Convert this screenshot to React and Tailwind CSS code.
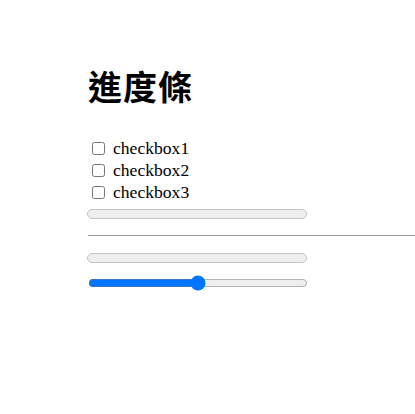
import React from "react";

function Bar({ className = "" }) {
  return (
    <div
      role="progressbar"
      aria-valuenow={0}
      className={`h-[10px] w-[220px] rounded-full border border-[#c4c4c4] bg-[#efefef] ${className}`}
    />
  );
}

function App() {
  const items = ["checkbox1", "checkbox2", "checkbox3"];
  return (
    <div className="min-h-[414px] w-full bg-white pl-[88px] pt-[66px] font-['Liberation_Serif',serif] text-black">
      <h1 className="text-[34px] leading-[40px] font-semibold font-['Noto_Sans_CJK_TC','Noto_Sans_CJK_SC',sans-serif] tracking-[1px]">
        進度條
      </h1>

      <div className="mt-[31px] flex flex-col">
        {items.map((label) => (
          <label key={label} className="flex h-[22px] items-center gap-[8px] pl-[4px] text-[17.6px]">
            <input type="checkbox" className="h-[13px] w-[13px]" />
            <span>{label}</span>
          </label>
        ))}
      </div>

      <Bar className="mt-[6px] -ml-[1px]" />

      <hr className="mt-[16px] border-t border-[#9a9a9a]" />

      <Bar className="mt-[17px] -ml-[1px]" />

      <input type="range" defaultValue={50} className="mt-[12px] block h-[16px] w-[220px]" />
    </div>
  );
}

export default App;
